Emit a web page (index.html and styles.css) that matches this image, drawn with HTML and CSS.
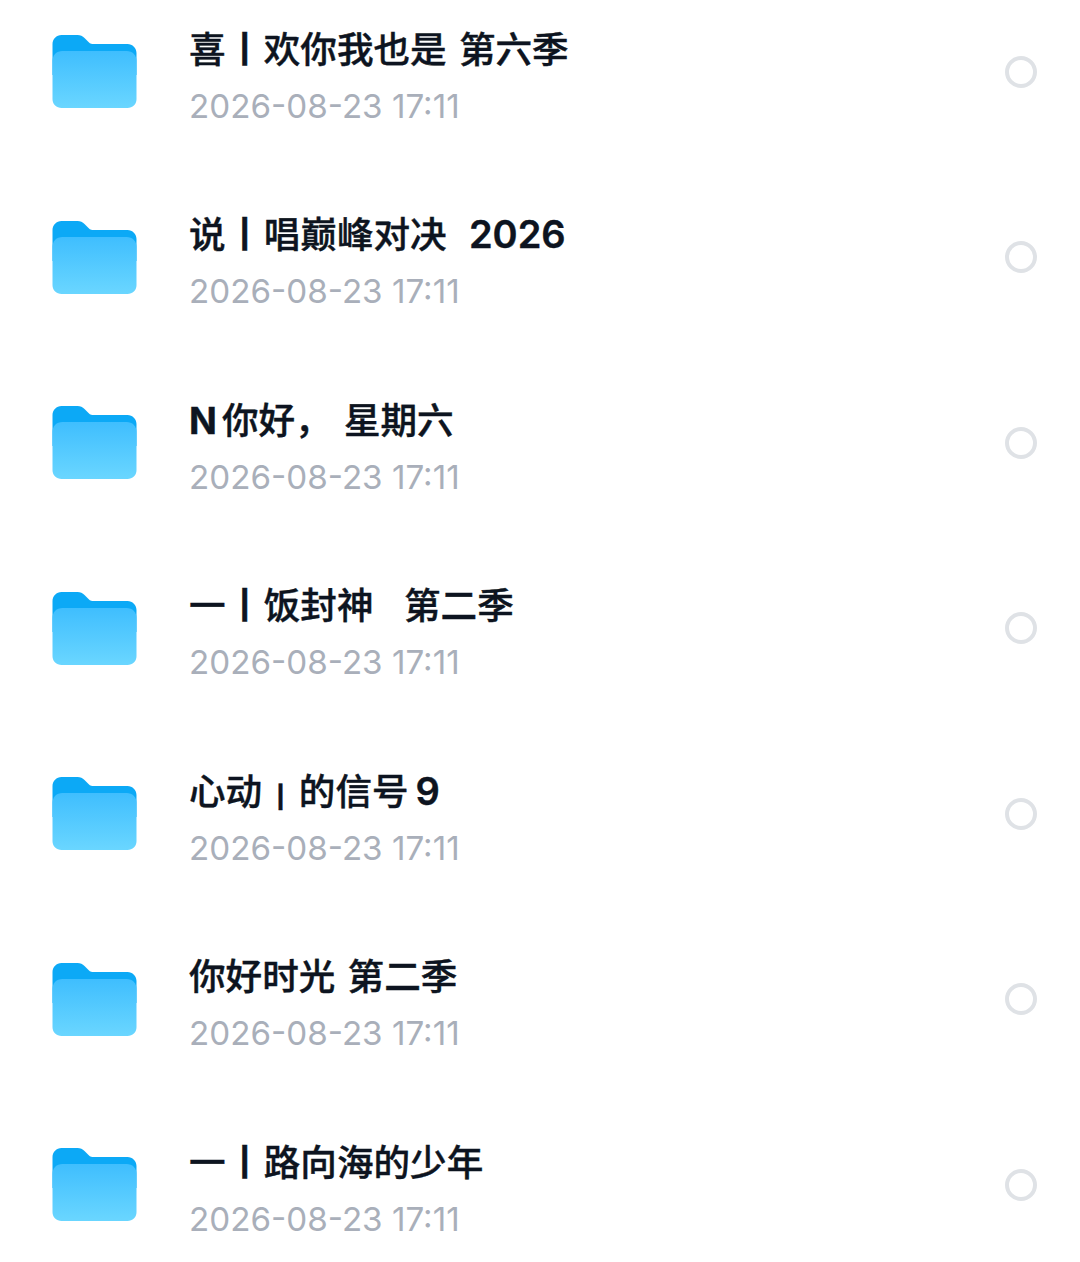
FILE: index.html
```html
<!DOCTYPE html>
<html lang="zh-CN">
<head>
<meta charset="utf-8">
<title>Folders</title>
<link rel="stylesheet" href="styles.css">
</head>
<body>
<svg class="defs" width="0" height="0" aria-hidden="true">
  <defs>
    <linearGradient id="front" x1="0" y1="0" x2="0" y2="1">
      <stop offset="0" stop-color="#3fbefe"/>
      <stop offset="1" stop-color="#6ad6ff"/>
    </linearGradient>
    <symbol id="folder" viewBox="0 0 84 73">
      <path d="M0 9C0 4 4 0 9 0H25C28 0 30 1 32 3L36 7C38 9 39 9 42 9H75C80 9 84 13 84 18V40H0Z" fill="#0ca9f6"/>
      <path d="M0 26C0 20 4 16 10 16H74C80 16 84 20 84 26V64C84 69.500 80 73 75 73H9C4 73 0 69.500 0 64Z" fill="url(#front)"/>
    </symbol>
  </defs>
</svg>
<main class="list">
  <div class="row"><svg class="folder"><use href="#folder"/></svg><div class="info"><div class="title">喜 <span class="pipe">|</span> 欢你我也是 第六季</div><div class="date">2026-08-23 17:11</div></div><span class="radio"></span></div>
  <div class="row"><svg class="folder"><use href="#folder"/></svg><div class="info"><div class="title">说 <span class="pipe">|</span> 唱巅峰对决 <span class="num">2026</span></div><div class="date">2026-08-23 17:11</div></div><span class="radio"></span></div>
  <div class="row"><svg class="folder"><use href="#folder"/></svg><div class="info"><div class="title"><span class="initial">N</span>你好， 星期六</div><div class="date">2026-08-23 17:11</div></div><span class="radio"></span></div>
  <div class="row"><svg class="folder"><use href="#folder"/></svg><div class="info"><div class="title">一 <span class="pipe">|</span> 饭封神&nbsp; <span class="gap">第二季</span></div><div class="date">2026-08-23 17:11</div></div><span class="radio"></span></div>
  <div class="row"><svg class="folder"><use href="#folder"/></svg><div class="info"><div class="title">心动 <span class="pipe pipe-short">|</span> 的信号<span class="digit">9</span></div><div class="date">2026-08-23 17:11</div></div><span class="radio"></span></div>
  <div class="row"><svg class="folder"><use href="#folder"/></svg><div class="info"><div class="title">你好时光 第二季</div><div class="date">2026-08-23 17:11</div></div><span class="radio"></span></div>
  <div class="row"><svg class="folder"><use href="#folder"/></svg><div class="info"><div class="title">一 <span class="pipe">|</span> 路向海的少年</div><div class="date">2026-08-23 17:11</div></div><span class="radio"></span></div>
</main>
</body>
</html>
```

FILE: styles.css
```css
html, body {
  margin: 0;
  background: #fff;
  height: 1262px;
  overflow: hidden;
}
.defs {
  position: absolute;
}
.list {
  margin-top: -21px;
  display: flex;
  flex-direction: column;
}
.row {
  height: 185.5px;
  display: flex;
  align-items: center;
  padding: 0 43px 0 52px;
}
.folder {
  width: 85px;
  height: 73px;
  flex: none;
}
.info {
  flex: 1;
  margin-left: 52px;
  display: flex;
  flex-direction: column;
  gap: 12px;
  padding-top: 8px;
}
.title {
  font-family: Inter, "Noto Sans CJK SC", sans-serif;
  font-size: 36.6px;
  line-height: 48px;
  font-weight: 500;
  -webkit-text-stroke: 0.4px #0d1420;
  color: #0d1420;
  white-space: pre;
  word-spacing: 2.5px;
}
.pipe {
  display: inline-block;
  margin: 0 1.4px;
  font-size: 28px;
  font-weight: 800;
  line-height: 1;
  vertical-align: 4px;
}
.pipe-short {
  margin: 0 1.8px;
  font-size: 22px;
  vertical-align: 0;
}
.num {
  margin-left: 10px;
  font-size: 38px;
  font-weight: 600;
  line-height: 1;
}
.digit {
  margin-left: 7px;
  font-size: 38px;
  font-weight: 600;
  line-height: 1;
}
.gap {
  margin-left: 6px;
}
.initial {
  margin-right: 5px;
  font-weight: 700;
}
.date {
  font-family: Inter, sans-serif;
  font-size: 33.2px;
  line-height: 40px;
  color: #a9afba;
}
.radio {
  box-sizing: border-box;
  width: 32px;
  height: 32px;
  border: 4px solid #dfe2e6;
  border-radius: 50%;
  flex: none;
}
```
